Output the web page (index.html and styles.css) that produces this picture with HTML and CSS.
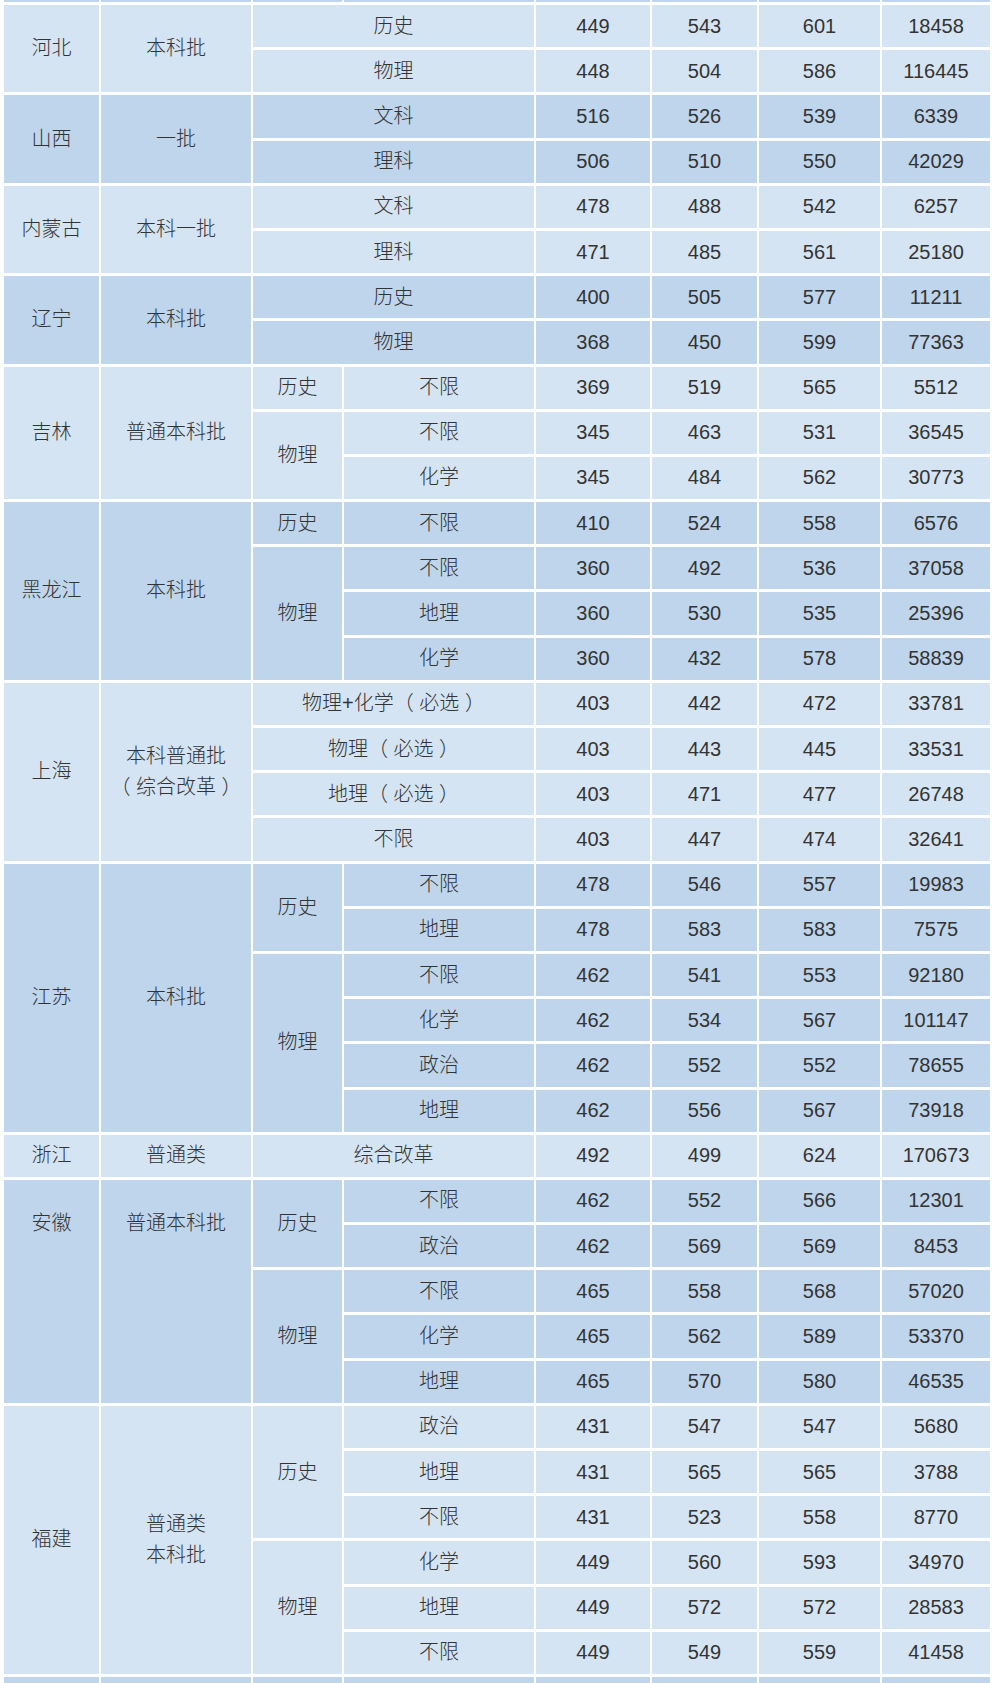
FILE: index.html
```html
<!DOCTYPE html>
<html lang="zh-CN">
<head>
<meta charset="utf-8">
<title>各省批次线</title>
<link rel="stylesheet" href="styles.css">
</head>
<body>
<table class="scores">
  <colgroup>
    <col class="c-prov"><col class="c-batch"><col class="c-subj"><col class="c-opt">
    <col class="c-n1"><col class="c-n2"><col class="c-n3"><col class="c-n4">
  </colgroup>
  <tbody>
    <tr class="dark edge"><td></td><td></td><td></td><td></td><td></td><td></td><td></td><td></td></tr>

    <tr class="light"><td rowspan="2">河北</td><td rowspan="2">本科批</td><td colspan="2">历史</td><td>449</td><td>543</td><td>601</td><td>18458</td></tr>
    <tr class="light"><td colspan="2">物理</td><td>448</td><td>504</td><td>586</td><td>116445</td></tr>

    <tr class="dark"><td rowspan="2">山西</td><td rowspan="2">一批</td><td colspan="2">文科</td><td>516</td><td>526</td><td>539</td><td>6339</td></tr>
    <tr class="dark"><td colspan="2">理科</td><td>506</td><td>510</td><td>550</td><td>42029</td></tr>

    <tr class="light"><td rowspan="2">内蒙古</td><td rowspan="2">本科一批</td><td colspan="2">文科</td><td>478</td><td>488</td><td>542</td><td>6257</td></tr>
    <tr class="light"><td colspan="2">理科</td><td>471</td><td>485</td><td>561</td><td>25180</td></tr>

    <tr class="dark"><td rowspan="2">辽宁</td><td rowspan="2">本科批</td><td colspan="2">历史</td><td>400</td><td>505</td><td>577</td><td>11211</td></tr>
    <tr class="dark"><td colspan="2">物理</td><td>368</td><td>450</td><td>599</td><td>77363</td></tr>

    <tr class="light"><td rowspan="3">吉林</td><td rowspan="3">普通本科批</td><td>历史</td><td>不限</td><td>369</td><td>519</td><td>565</td><td>5512</td></tr>
    <tr class="light"><td rowspan="2">物理</td><td>不限</td><td>345</td><td>463</td><td>531</td><td>36545</td></tr>
    <tr class="light"><td>化学</td><td>345</td><td>484</td><td>562</td><td>30773</td></tr>

    <tr class="dark"><td rowspan="4">黑龙江</td><td rowspan="4">本科批</td><td>历史</td><td>不限</td><td>410</td><td>524</td><td>558</td><td>6576</td></tr>
    <tr class="dark"><td rowspan="3">物理</td><td>不限</td><td>360</td><td>492</td><td>536</td><td>37058</td></tr>
    <tr class="dark"><td>地理</td><td>360</td><td>530</td><td>535</td><td>25396</td></tr>
    <tr class="dark"><td>化学</td><td>360</td><td>432</td><td>578</td><td>58839</td></tr>

    <tr class="light"><td rowspan="4">上海</td><td rowspan="4">本科普通批<br>（ 综合改革 ）</td><td colspan="2">物理+化学（ 必选 ）</td><td>403</td><td>442</td><td>472</td><td>33781</td></tr>
    <tr class="light"><td colspan="2">物理（ 必选 ）</td><td>403</td><td>443</td><td>445</td><td>33531</td></tr>
    <tr class="light"><td colspan="2">地理（ 必选 ）</td><td>403</td><td>471</td><td>477</td><td>26748</td></tr>
    <tr class="light"><td colspan="2">不限</td><td>403</td><td>447</td><td>474</td><td>32641</td></tr>

    <tr class="dark"><td rowspan="6">江苏</td><td rowspan="6">本科批</td><td rowspan="2">历史</td><td>不限</td><td>478</td><td>546</td><td>557</td><td>19983</td></tr>
    <tr class="dark"><td>地理</td><td>478</td><td>583</td><td>583</td><td>7575</td></tr>
    <tr class="dark"><td rowspan="4">物理</td><td>不限</td><td>462</td><td>541</td><td>553</td><td>92180</td></tr>
    <tr class="dark"><td>化学</td><td>462</td><td>534</td><td>567</td><td>101147</td></tr>
    <tr class="dark"><td>政治</td><td>462</td><td>552</td><td>552</td><td>78655</td></tr>
    <tr class="dark"><td>地理</td><td>462</td><td>556</td><td>567</td><td>73918</td></tr>

    <tr class="light"><td>浙江</td><td>普通类</td><td colspan="2">综合改革</td><td>492</td><td>499</td><td>624</td><td>170673</td></tr>

    <tr class="dark"><td rowspan="5" class="top-cell">安徽</td><td rowspan="5" class="top-cell">普通本科批</td><td rowspan="2">历史</td><td>不限</td><td>462</td><td>552</td><td>566</td><td>12301</td></tr>
    <tr class="dark"><td>政治</td><td>462</td><td>569</td><td>569</td><td>8453</td></tr>
    <tr class="dark"><td rowspan="3">物理</td><td>不限</td><td>465</td><td>558</td><td>568</td><td>57020</td></tr>
    <tr class="dark"><td>化学</td><td>465</td><td>562</td><td>589</td><td>53370</td></tr>
    <tr class="dark"><td>地理</td><td>465</td><td>570</td><td>580</td><td>46535</td></tr>

    <tr class="light"><td rowspan="6">福建</td><td rowspan="6">普通类<br>本科批</td><td rowspan="3">历史</td><td>政治</td><td>431</td><td>547</td><td>547</td><td>5680</td></tr>
    <tr class="light"><td>地理</td><td>431</td><td>565</td><td>565</td><td>3788</td></tr>
    <tr class="light"><td>不限</td><td>431</td><td>523</td><td>558</td><td>8770</td></tr>
    <tr class="light"><td rowspan="3">物理</td><td>化学</td><td>449</td><td>560</td><td>593</td><td>34970</td></tr>
    <tr class="light"><td>地理</td><td>449</td><td>572</td><td>572</td><td>28583</td></tr>
    <tr class="light"><td>不限</td><td>449</td><td>549</td><td>559</td><td>41458</td></tr>

    <tr class="dark"><td></td><td></td><td></td><td></td><td></td><td></td><td></td><td></td></tr>
  </tbody>
</table>
</body>
</html>
```

FILE: styles.css
```css
html, body {
  margin: 0;
  padding: 0;
  background: #ffffff;
  overflow: hidden;
}

.scores {
  border-collapse: separate;
  border-spacing: 2px 3px;
  table-layout: fixed;
  width: 990px;
  margin: -3px 0 0 2px;
  font-family: "Liberation Sans", "Noto Sans CJK SC", sans-serif;
  font-size: 20px;
  font-weight: 300;
  color: #333333;
  text-spacing-trim: space-all;
}

.c-prov { width: 95px; }
.c-batch { width: 150px; }
.c-subj { width: 89px; }
.c-opt { width: 190px; }
.c-n1 { width: 114px; }
.c-n2 { width: 105px; }
.c-n3 { width: 121px; }
.c-n4 { width: 108px; }

.scores tr {
  height: 42.2px;
}

.scores tr.edge {
  height: 2px;
}

.scores td {
  padding: 0;
  text-align: center;
  vertical-align: middle;
  line-height: 31px;
  white-space: nowrap;
}

.scores tr.edge td {
  line-height: 0;
  height: 2px;
}

.light td {
  background: #d5e4f2;
}

.dark td {
  background: #bed5ec;
}

.scores td.top-cell {
  vertical-align: top;
  padding-top: 28px;
}
```
